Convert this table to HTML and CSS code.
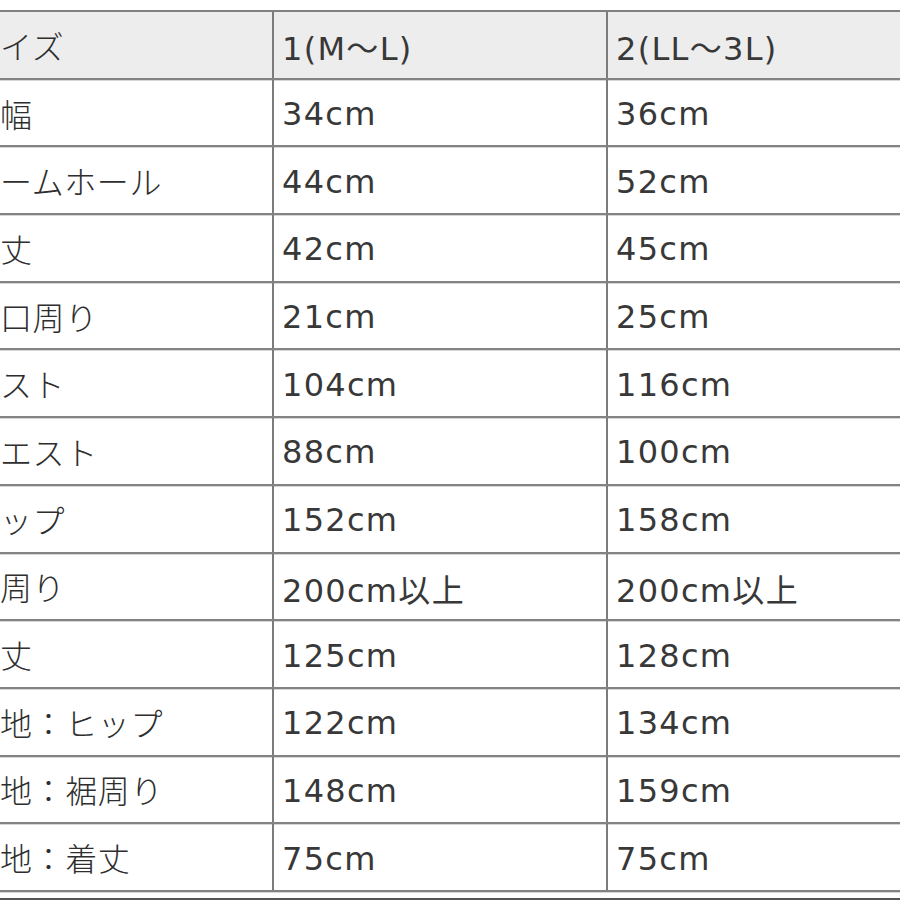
FILE: index.html
```html
<!DOCTYPE html>
<html lang="ja">
<head>
<meta charset="utf-8">
<title>サイズ表</title>
<link rel="stylesheet" href="styles.css">
</head>
<body>
<div class="sheet">
  <div class="size-table">
    <div class="row head"><div class="cell label">イズ</div><div class="cell">1(M〜L)</div><div class="cell">2(LL〜3L)</div></div>
    <div class="row"><div class="cell label">幅</div><div class="cell">34cm</div><div class="cell">36cm</div></div>
    <div class="row"><div class="cell label">ームホール</div><div class="cell">44cm</div><div class="cell">52cm</div></div>
    <div class="row"><div class="cell label">丈</div><div class="cell">42cm</div><div class="cell">45cm</div></div>
    <div class="row"><div class="cell label">口周り</div><div class="cell">21cm</div><div class="cell">25cm</div></div>
    <div class="row"><div class="cell label">スト</div><div class="cell">104cm</div><div class="cell">116cm</div></div>
    <div class="row"><div class="cell label">エスト</div><div class="cell">88cm</div><div class="cell">100cm</div></div>
    <div class="row"><div class="cell label">ップ</div><div class="cell">152cm</div><div class="cell">158cm</div></div>
    <div class="row"><div class="cell label">周り</div><div class="cell">200cm以上</div><div class="cell">200cm以上</div></div>
    <div class="row"><div class="cell label">丈</div><div class="cell">125cm</div><div class="cell">128cm</div></div>
    <div class="row"><div class="cell label">地：ヒップ</div><div class="cell">122cm</div><div class="cell">134cm</div></div>
    <div class="row"><div class="cell label">地：裾周り</div><div class="cell">148cm</div><div class="cell">159cm</div></div>
    <div class="row"><div class="cell label">地：着丈</div><div class="cell">75cm</div><div class="cell">75cm</div></div>
  </div>
  <div class="next-rule"></div>
</div>
</body>
</html>
```

FILE: styles.css
```css
html, body {
  margin: 0;
  padding: 0;
  background: #ffffff;
  overflow: hidden;
}

.sheet {
  width: 900px;
  height: 900px;
  overflow: hidden;
  padding-top: 10px;
  box-sizing: border-box;
}

.size-table {
  width: 1000px;
  border-top: 2px solid #808080;
  font-family: "DejaVu Sans", "Noto Sans CJK JP", sans-serif;
  font-size: 32px;
  font-weight: 400;
  letter-spacing: 1.3px;
  color: #383838;
}

.row {
  display: grid;
  grid-template-columns: 272px 334px 1fr;
  height: 67.7px;
  box-sizing: border-box;
  border-bottom: 2px solid #838383;
  box-shadow: 0 1px 0 #d6d6d6;
}

.row.head {
  background: #ededed;
}

.cell {
  display: flex;
  align-items: center;
  padding-left: 8px;
  padding-top: 3px;
  border-left: 2px solid #7c7c7c;
  white-space: nowrap;
}

.cell.label {
  padding-left: 0;
  padding-top: 0;
  border-left: none;
  font-family: "Noto Sans CJK JP", sans-serif;
  font-weight: 300;
  letter-spacing: 0.6px;
  color: #2e2e2e;
}

.next-rule {
  margin-top: 6px;
  border-top: 2px solid #555555;
}
```
